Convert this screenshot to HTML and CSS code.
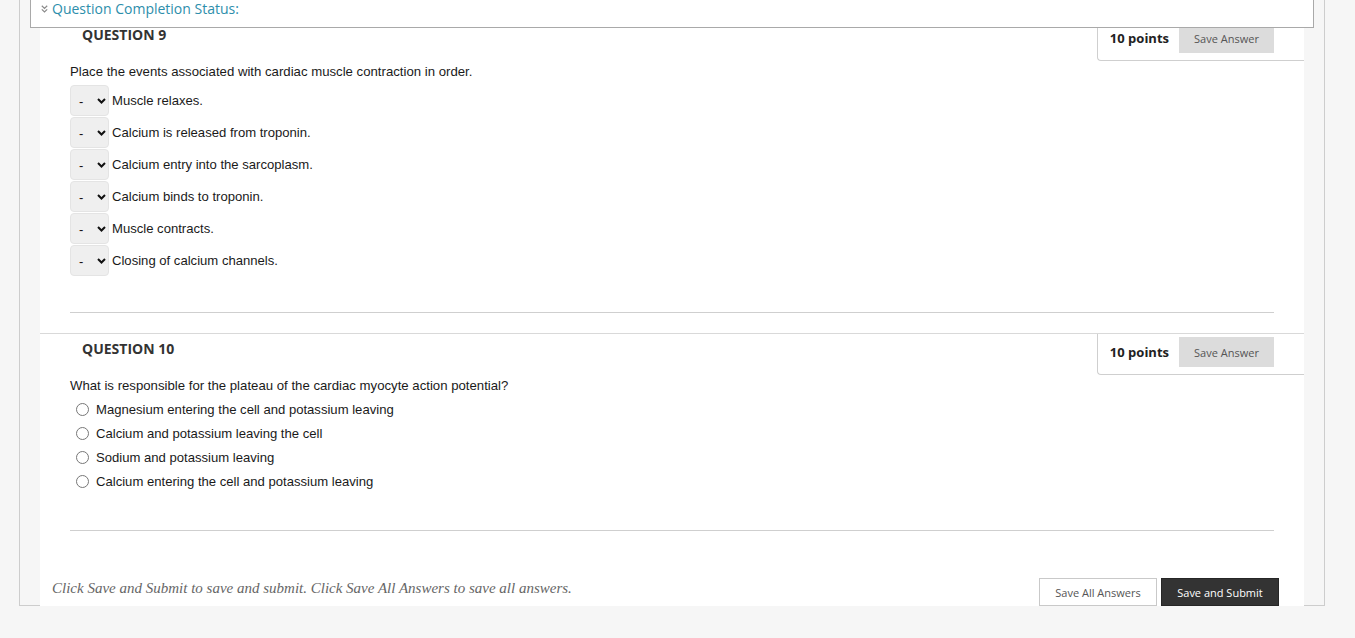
FILE: index.html
```html
<!DOCTYPE html>
<html lang="en">
<head>
<meta charset="utf-8">
<title>Test</title>
<link rel="stylesheet" href="styles.css">
</head>
<body>
<div class="outer">
  <div class="status-bar">
    <svg class="status-icon" width="7" height="8" viewBox="0 0 7 8" aria-hidden="true">
      <path d="M0.8 0.8 L3.5 3.4 L6.2 0.8 M0.8 4.4 L3.5 7 L6.2 4.4" fill="none" stroke="#8a8a8a" stroke-width="1.2"/>
    </svg>
    <a class="status-link" href="#">Question Completion Status:</a>
  </div>
  <div class="content">
    <section class="question">
      <div class="q-head">
        <h3 class="q-title">QUESTION 9</h3>
        <div class="points-box">
          <span class="points">10 points</span>
          <button class="save-answer">Save Answer</button>
        </div>
      </div>
      <div class="q-body">
        <p class="q-text">Place the events associated with cardiac muscle contraction in order.</p>
        <ul class="order-list">
          <li class="order-row"><span class="fake-select"><span class="dash">-</span><svg class="chev" width="9" height="6" viewBox="0 0 9 6"><path d="M1 1 L4.5 4.5 L8 1" fill="none" stroke="#111" stroke-width="2"/></svg></span><span>Muscle relaxes.</span></li>
          <li class="order-row"><span class="fake-select"><span class="dash">-</span><svg class="chev" width="9" height="6" viewBox="0 0 9 6"><path d="M1 1 L4.5 4.5 L8 1" fill="none" stroke="#111" stroke-width="2"/></svg></span><span>Calcium is released from troponin.</span></li>
          <li class="order-row"><span class="fake-select"><span class="dash">-</span><svg class="chev" width="9" height="6" viewBox="0 0 9 6"><path d="M1 1 L4.5 4.5 L8 1" fill="none" stroke="#111" stroke-width="2"/></svg></span><span>Calcium entry into the sarcoplasm.</span></li>
          <li class="order-row"><span class="fake-select"><span class="dash">-</span><svg class="chev" width="9" height="6" viewBox="0 0 9 6"><path d="M1 1 L4.5 4.5 L8 1" fill="none" stroke="#111" stroke-width="2"/></svg></span><span>Calcium binds to troponin.</span></li>
          <li class="order-row"><span class="fake-select"><span class="dash">-</span><svg class="chev" width="9" height="6" viewBox="0 0 9 6"><path d="M1 1 L4.5 4.5 L8 1" fill="none" stroke="#111" stroke-width="2"/></svg></span><span>Muscle contracts.</span></li>
          <li class="order-row"><span class="fake-select"><span class="dash">-</span><svg class="chev" width="9" height="6" viewBox="0 0 9 6"><path d="M1 1 L4.5 4.5 L8 1" fill="none" stroke="#111" stroke-width="2"/></svg></span><span>Closing of calcium channels.</span></li>
        </ul>
      </div>
      <hr class="q-rule">
    </section>
    <section class="question">
      <div class="q-head">
        <h3 class="q-title">QUESTION 10</h3>
        <div class="points-box">
          <span class="points">10 points</span>
          <button class="save-answer">Save Answer</button>
        </div>
      </div>
      <div class="q-body">
        <p class="q-text">What is responsible for the plateau of the cardiac myocyte action potential?</p>
        <ul class="radio-list">
          <li class="radio-row"><span class="radio"></span><span>Magnesium entering the cell and potassium leaving</span></li>
          <li class="radio-row"><span class="radio"></span><span>Calcium and potassium leaving the cell</span></li>
          <li class="radio-row"><span class="radio"></span><span>Sodium and potassium leaving</span></li>
          <li class="radio-row"><span class="radio"></span><span>Calcium entering the cell and potassium leaving</span></li>
        </ul>
      </div>
      <hr class="q-rule">
    </section>
    <div class="footer">
      <p class="footer-note">Click Save and Submit to save and submit. Click Save All Answers to save all answers.</p>
      <div class="footer-buttons">
        <button class="btn-light">Save All Answers</button>
        <button class="btn-dark">Save and Submit</button>
      </div>
    </div>
  </div>
</div>
</body>
</html>
```
FILE: styles.css
```css
* { box-sizing: border-box; }
html, body { margin: 0; padding: 0; }
body {
  background: #f6f6f6;
  font-family: "Liberation Sans", Arial, sans-serif;
  color: #1a1a1a;
}
.outer {
  position: relative;
  margin-left: 19px;
  width: 1306px;
  height: 606px;
  border: 1px solid #cdcdcd;
  border-top: none;
  padding-left: 20px;
}
.status-bar {
  position: absolute;
  top: 0;
  left: 10px;
  width: 1284px;
  height: 28px;
  background: #fff;
  border: 1px solid #a9a9a9;
  border-top: none;
  display: flex;
  align-items: flex-start;
  padding: 0 0 0 10px;
  z-index: 2;
}
.status-icon { margin-top: 5px; flex: none; }
.status-link {
  margin-left: 4px;
  font-family: "Open Sans", sans-serif;
  font-size: 14px;
  line-height: 18px;
  color: #2d8eab;
  text-decoration: none;
}
.content {
  position: relative;
  z-index: 1;
  width: 1264px;
  background: #fff;
  padding-top: 19px;
  padding-bottom: 20px;
}
.question { border-top: 1px solid #d9d9d9; }
.q-head {
  display: flex;
  justify-content: space-between;
  align-items: flex-start;
}
.q-title {
  margin: 0;
  padding-left: 42px;
  font-family: "Open Sans", sans-serif;
  font-weight: 700;
  font-size: 14px;
  line-height: 30px;
  color: #333;
}
.points-box {
  display: flex;
  align-items: center;
  padding: 3px 30px 7px 12px;
  border-left: 1px solid #cfcfcf;
  border-bottom: 1px solid #cfcfcf;
  border-bottom-left-radius: 4px;
  background: #fff;
}
.points {
  font-family: "Open Sans", sans-serif;
  font-weight: 700;
  font-size: 13px;
  color: #222;
}
.save-answer {
  margin-left: 10px;
  width: 95px;
  height: 30px;
  border: none;
  background: #dcdcdc;
  font-family: "Open Sans", sans-serif;
  font-size: 11px;
  color: #555;
  padding: 0;
}
.q-body { padding: 1px 30px 0; }
.q-text {
  margin: 0 0 2px;
  font-size: 13.2px;
  line-height: 20px;
}
.order-list, .radio-list { list-style: none; margin: 0; padding: 0; }
.order-row {
  display: flex;
  align-items: center;
  height: 32px;
  font-size: 13.1px;
}
.fake-select {
  display: flex;
  align-items: center;
  justify-content: space-between;
  flex: none;
  width: 39px;
  height: 31px;
  margin-right: 3px;
  padding: 2px 2px 0 8px;
  background: #efefef;
  border: 1px solid #e4e4e4;
  border-radius: 4px;
  font-size: 13px;
  color: #111;
}
.chev { margin-top: -1px; flex: none; }
.radio-list { margin-top: -1px; padding-bottom: 1px; }
.radio-row {
  display: flex;
  align-items: center;
  height: 24px;
  font-size: 13.1px;
}
.radio {
  flex: none;
  width: 13px;
  height: 13px;
  margin: 0 7px 0 6px;
  border: 1px solid #777;
  border-radius: 50%;
  background: #fff;
}
.q-rule {
  margin: 36px 30px 20px;
  border: none;
  border-top: 1px solid #cfcfcf;
  height: 0;
}
.footer {
  display: flex;
  justify-content: space-between;
  align-items: flex-start;
  padding: 27px 25px 0 12px;
}
.footer-note {
  margin: 0;
  font-family: "Liberation Serif", "Times New Roman", serif;
  font-style: italic;
  font-size: 15px;
  line-height: 20px;
  color: #666;
}
.footer-buttons { display: flex; gap: 4px; }
.btn-light, .btn-dark {
  width: 118px;
  height: 28px;
  padding: 0;
  font-family: "Open Sans", sans-serif;
  font-size: 11px;
}
.btn-light { background: #fff; border: 1px solid #c9c9c9; color: #555; }
.btn-dark { background: #333; border: 1px solid #262626; color: #fff; }
```
